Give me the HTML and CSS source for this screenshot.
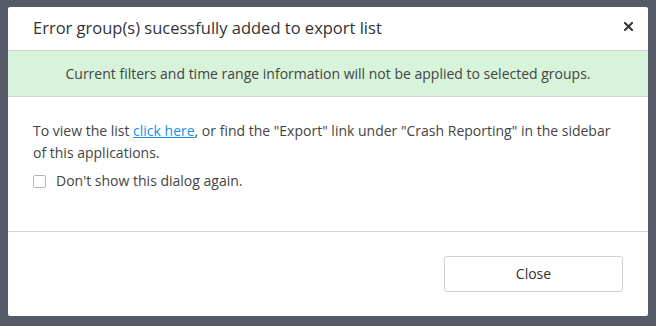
FILE: index.html
```html
<!DOCTYPE html>
<html>
<head>
<meta charset="utf-8">
<link rel="stylesheet" href="styles.css">
</head>
<body>
<div class="dialog">
  <div class="header">
    <h1 class="title">Error group(s) sucessfully added to export list</h1>
    <button class="x-btn" aria-label="Close">
      <svg width="9" height="9" viewBox="0 0 9 9"><path d="M1 1L8 8M8 1L1 8" stroke="#333" stroke-width="2" stroke-linecap="square"/></svg>
    </button>
  </div>
  <div class="notice">Current filters and time range information will not be applied to selected groups.</div>
  <div class="body">
    <p class="text">To view the list <a href="#" class="link">click here</a>, or find the "Export" link under "Crash Reporting" in the sidebar of this applications.</p>
    <label class="check"><span class="box"></span><span>Don't show this dialog again.</span></label>
  </div>
  <div class="footer">
    <button class="close-btn">Close</button>
  </div>
</div>
</body>
</html>
```
FILE: styles.css
```css
html, body {
  margin: 0;
  padding: 0;
}
body {
  background: #545b67;
  width: 656px;
  height: 326px;
  overflow: hidden;
  font-family: "Open Sans", "Liberation Sans", sans-serif;
  color: #333;
}
.dialog {
  margin: 7px 0 0 8px;
  width: 640px;
  height: 309px;
  background: #fff;
  border-radius: 2px;
  display: flex;
  flex-direction: column;
}
.header {
  display: flex;
  align-items: center;
  justify-content: space-between;
  padding: 0 15px 0 25px;
  box-sizing: border-box;
  height: 44px;
  border-bottom: 1px solid #d4d4d4;
}
.title {
  margin: 0;
  font-size: 16.5px;
  font-weight: 400;
  color: #333;
  line-height: 20px;
  padding-bottom: 1px;
}
.x-btn {
  border: 0;
  background: none;
  padding: 0;
  width: 9px;
  height: 9px;
  display: flex;
  margin-bottom: 4px;
}
.notice {
  background: #d7f3da;
  border-bottom: 1px solid #cfd8d0;
  height: 46px;
  box-sizing: border-box;
  display: flex;
  align-items: center;
  justify-content: center;
  font-size: 14px;
  color: #444;
  padding-bottom: 1px;
}
.body {
  flex: 1;
  padding: 23px 25px 0 25px;
  border-bottom: 1px solid #d4d4d4;
}
.text {
  margin: 0;
  font-size: 14px;
  line-height: 22px;
  color: #444;
}
.link {
  color: #1a8fe6;
  text-decoration: underline;
}
.check {
  display: flex;
  align-items: center;
  margin-top: 8px;
  font-size: 14px;
  color: #444;
  line-height: 18px;
}
.box {
  width: 11px;
  height: 11px;
  border: 1px solid #b5b5b5;
  border-radius: 2px;
  margin-right: 10px;
  flex: none;
}
.footer {
  height: 84px;
  box-sizing: border-box;
  padding: 24px 25px 24px 0;
  display: flex;
  justify-content: flex-end;
}
.close-btn {
  width: 179px;
  height: 36px;
  background: #fff;
  border: 1px solid #d0d0d0;
  border-radius: 3px;
  font-family: "Open Sans", "Liberation Sans", sans-serif;
  font-size: 14px;
  color: #333;
  padding: 0 0 2px 0;
}
```
